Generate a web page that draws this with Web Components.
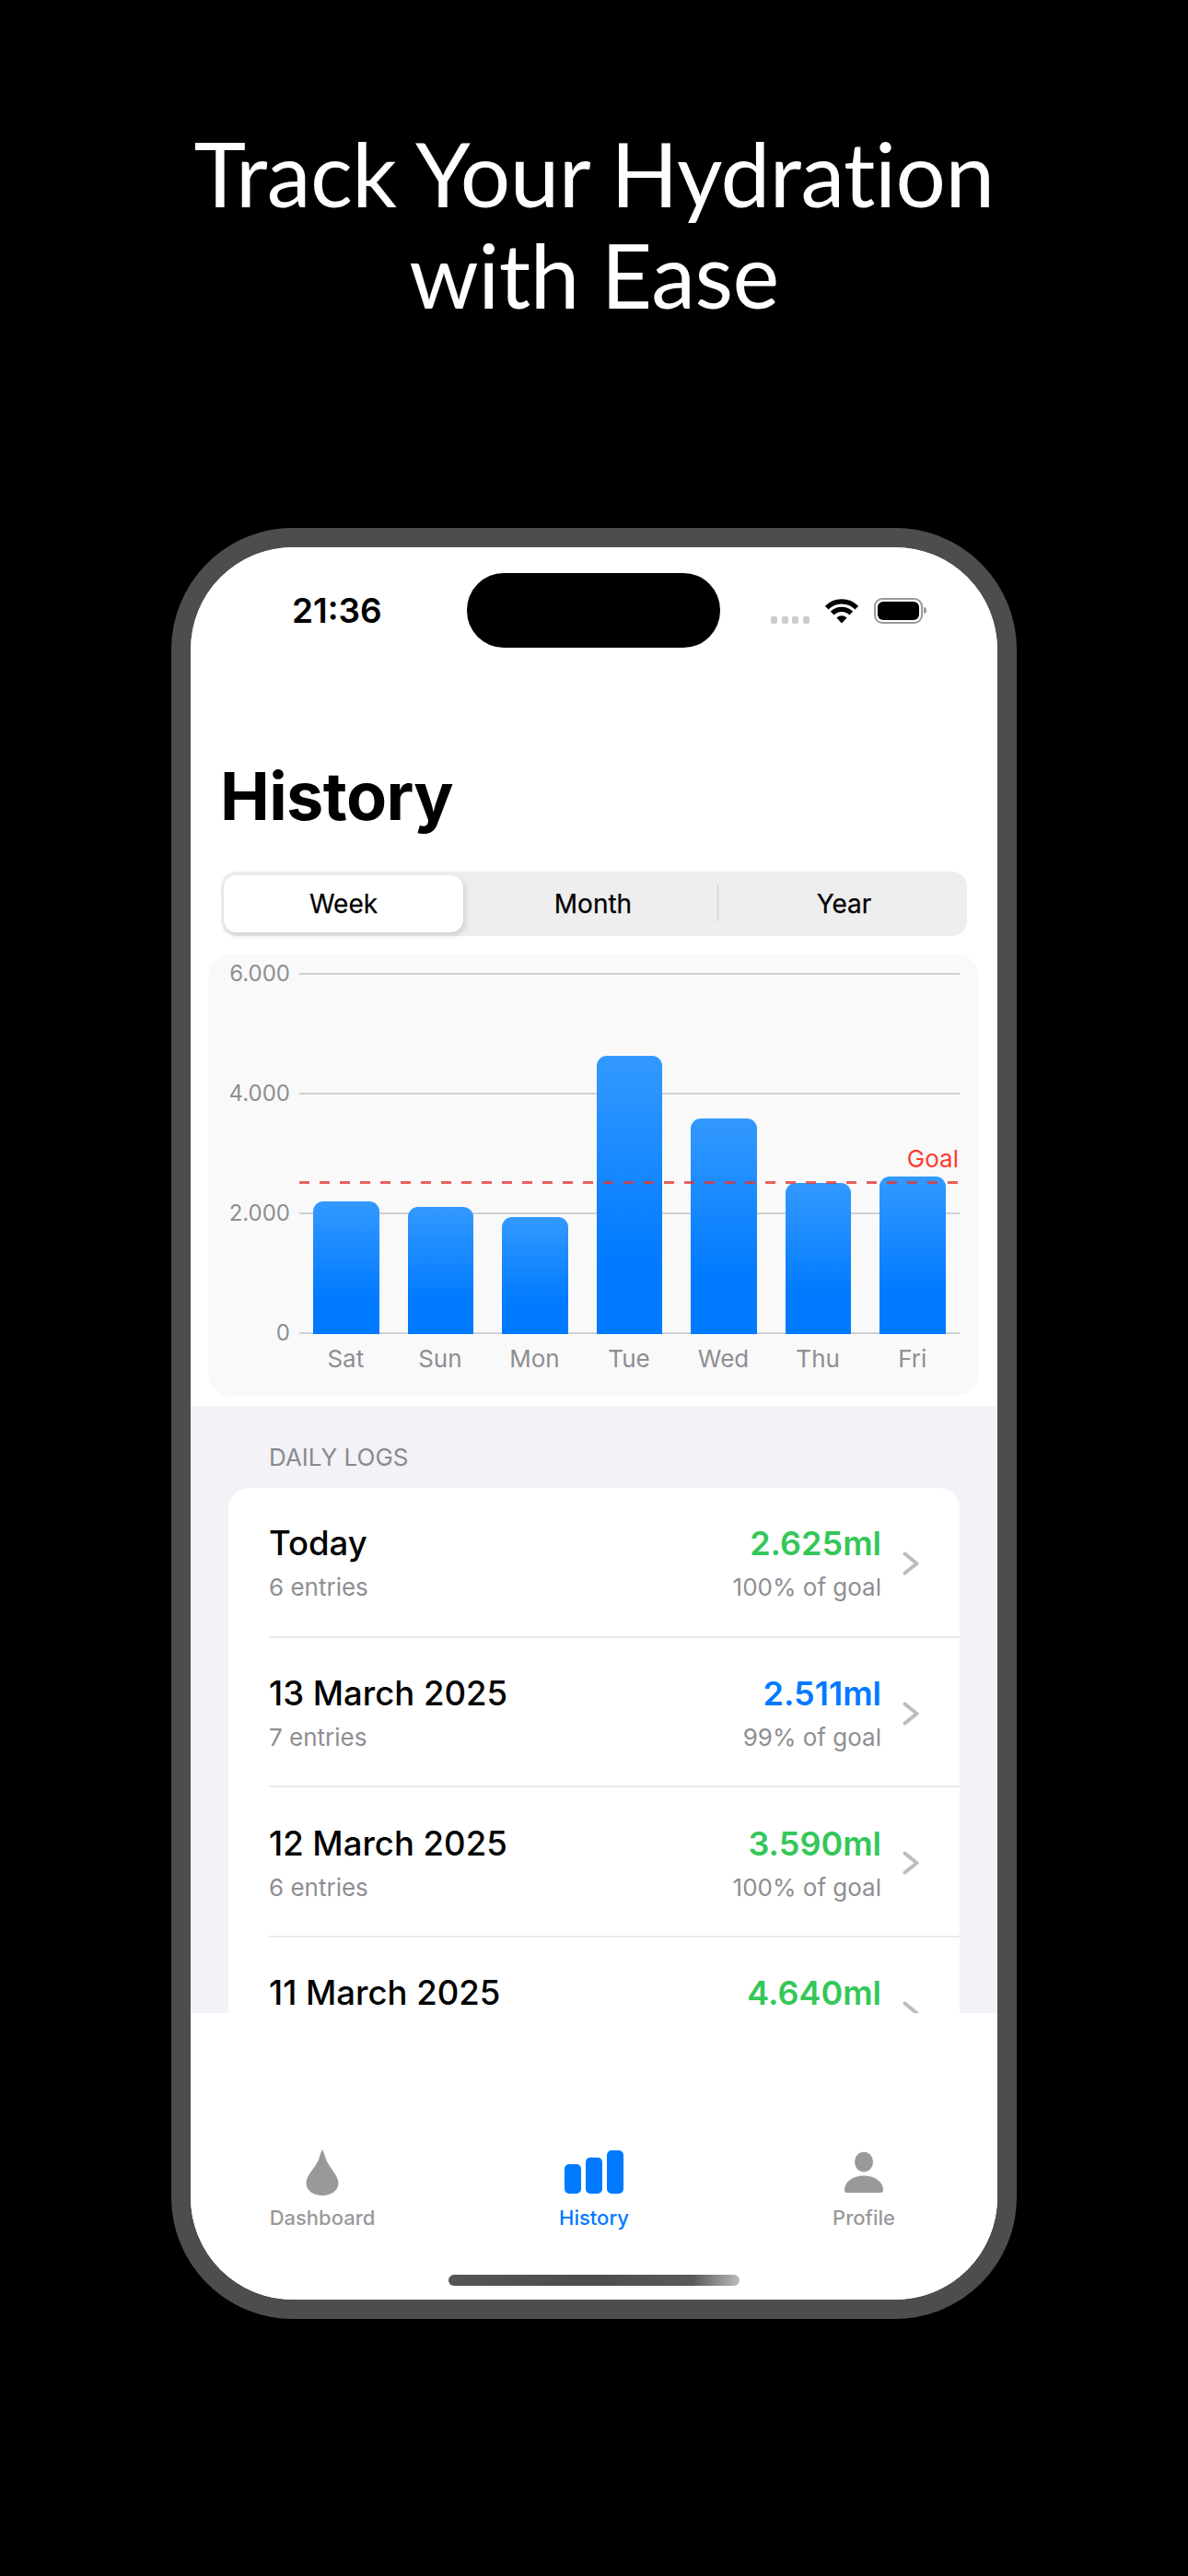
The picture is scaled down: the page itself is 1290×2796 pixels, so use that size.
<!DOCTYPE html>
<html lang="en"><head><meta charset="utf-8"><title>History</title>
<style>html,body{margin:0;background:#000}body{width:1290px;height:2796px;overflow:hidden;font-family:Inter,"Liberation Sans",sans-serif}</style>
</head><body>
<hydration-page>
  <promo-headline>Track Your Hydration<br>with Ease</promo-headline>
  <phone-frame>
    <status-bar time="21:36"></status-bar>
    <page-title>History</page-title>
    <segmented-control></segmented-control>
    <history-chart></history-chart>
    <daily-logs>
      <log-row title="Today" entries="6 entries" value="2.625ml" percent="100% of goal" color="#34c759"></log-row>
      <log-row title="13 March 2025" entries="7 entries" value="2.511ml" percent="99% of goal" color="#007aff"></log-row>
      <log-row title="12 March 2025" entries="6 entries" value="3.590ml" percent="100% of goal" color="#34c759"></log-row>
      <log-row title="11 March 2025" entries="" value="4.640ml" percent="" color="#34c759"></log-row>
    </daily-logs>
    <tab-bar></tab-bar>
  </phone-frame>
</hydration-page>
<script>
const def=(name,html)=>customElements.define(name,class extends HTMLElement{
  connectedCallback(){ if(this.shadowRoot) return; const r=this.attachShadow({mode:'open'}); r.innerHTML=typeof html==='function'?html(this):html; }
});
def('hydration-page',`<style>:host{display:block;width:1290px;height:2796px;background:#000}</style><slot></slot>`);
def('promo-headline',`<style>:host{display:block;height:573px;box-sizing:border-box;padding-top:133px;text-align:center;color:#fff;font:400 96px/110px Lato,"Open Sans",sans-serif;letter-spacing:-.5px}</style><slot></slot>`);
def('phone-frame',`<style>
:host{display:block;width:918px;height:1944px;margin:0 186px;box-sizing:border-box;border:21px solid #4d4d4d;border-radius:132px;background:#fff;overflow:hidden}
.s{display:flex;flex-direction:column;height:100%;background:#fff;border-radius:110px;overflow:hidden}
</style><div class="s"><slot></slot></div>`);
def('status-bar',h=>`<style>
:host{display:grid;grid-template-columns:300px 275px 1fr;height:230px;box-sizing:border-box;padding-top:28px;align-items:start;flex:none}
.t{height:81px;display:flex;align-items:center;padding-left:110px;font:600 37px/46px Inter,sans-serif;color:#000}
.i{height:81px;background:#000;border-radius:40px}
.r{height:81px;display:flex;align-items:center;padding-left:55px;gap:17px}
.d{display:flex;gap:4.6px;align-self:center;margin-top:20px}.d i{width:7px;height:8px;border-radius:2px;background:#ccc}
svg{display:block}
.b{width:53px;height:28px;box-sizing:border-box;border:2px solid #999;border-radius:9px;padding:2px;position:relative}
.b i{display:block;height:100%;background:#000;border-radius:6px}
.b::after{content:"";position:absolute;right:-6px;top:8px;width:3px;height:7px;background:#999;border-radius:0 3px 3px 0}
</style><div class="t">${h.getAttribute('time')}</div><div class="i"></div>
<div class="r"><div class="d"><i></i><i></i><i></i><i></i></div>
<svg width="36" height="28" viewBox="0 0 36 28" fill="none" stroke="#000" stroke-width="5.2"><path d="M1.7 10.7A23 23 0 0 1 34.3 10.7"/><path d="M7.700 16.700A14.500 14.500 0 0 1 28.300 16.700"/><path d="M18 27.500L12.400 21.600A8 8 0 0 1 23.600 21.600Z" fill="#000" stroke="none"/></svg>
<div class="b"><i></i></div></div>`);
def('page-title',`<style>:host{display:block;flex:none;padding-left:32px;height:80px;font:700 72px/80px Inter,sans-serif;color:#000;letter-spacing:-.6px;margin-bottom:42px}</style><slot></slot>`);
def('segmented-control',`<style>
:host{display:grid;grid-template-columns:260px 277px 1fr;flex:none;margin:0 33px 20px 33px;height:70px;box-sizing:border-box;padding:4px 3px;background:#eee;border-radius:16px;font:400 28px/34px Inter,sans-serif;color:#000;-webkit-text-stroke:.25px #000}
div{display:flex;align-items:center;justify-content:center}
.a{background:#fff;border-radius:14px;box-shadow:2px 3px 6px rgba(0,0,0,.14)}
.c{position:relative;padding-left:5px}.c::after{content:"";position:absolute;right:0;top:11px;bottom:12px;width:1px;background:#ccc}
.y{padding-left:6px}
</style><div class="a">Week</div><div class="c">Month</div><div class="y">Year</div>`);
customElements.define('history-chart',class extends HTMLElement{connectedCallback(){ if(this.shadowRoot)return;
 const vals=[['Sat',2215],['Sun',2110],['Mon',1940],['Tue',4640],['Wed',3590],['Thu',2511],['Fri',2625]];
 const r=this.attachShadow({mode:'open'});
 r.innerHTML=`<style>
:host{display:block;flex:none;margin:0 20px 11px 19px;height:479px;box-sizing:border-box;padding:20.5px 21px 0 0;background:#f9f9f9;border-radius:24px;font:400 24px/30px Inter,sans-serif;color:#8e8e93}
.p{display:grid;height:391px;position:relative}
.p>*{grid-area:1/1}
.g{display:flex;flex-direction:column;justify-content:space-between}
.g div{display:flex;align-items:center;height:1px}
.g span{width:89px;text-align:right;margin-right:10px;flex:none}
.g i{flex:1;height:2px;background:#d0d0d2}
.b{margin-left:99px;display:grid;grid-template-columns:repeat(7,1fr);align-items:end}
.b i{display:block;width:71.5px;justify-self:center;border-radius:11px 11px 0 0;background:linear-gradient(#3399ff,#007aff 75%)}
.l{margin:12px 0 0 98px;display:grid;grid-template-columns:repeat(7,1fr);text-align:center;font-size:26px}
.goal{position:absolute;left:99px;right:0;top:225px;height:3px;background:repeating-linear-gradient(90deg,rgba(224,56,50,.78) 0 11px,transparent 11px 22px)}
.t{position:absolute;right:1px;top:186px;color:#ff3b30;font-size:26px}
</style>
<div class="p"><div class="g">${['6.000','4.000','2.000','0'].map(t=>`<div><span>${t}</span><i></i></div>`).join('')}</div>
<div class="b">${vals.map(v=>`<i style="height:${v[1]*.065}px"></i>`).join('')}</div>
<div class="goal"></div><div class="t">Goal</div></div>
<div class="l">${vals.map(v=>`<span>${v[0]}</span>`).join('')}</div>`;
}});
def('daily-logs',`<style>
:host{display:block;flex:1;min-height:0;overflow:hidden;background:#f2f2f7}
h2{margin:0;padding:40px 0 0 85px;height:89px;box-sizing:border-box;font:400 26px/32px Inter,sans-serif;color:#8a8a8e}
.c{margin:0 41px;background:#fff;border-radius:22px 22px 0 0}
</style><h2>DAILY LOGS</h2><div class="c"><slot></slot></div>`);
def('log-row',h=>{const e=h.getAttribute('entries'),p=h.getAttribute('percent');return `<style>
:host{display:block;padding-left:44px}
.w{height:162.7px;box-sizing:border-box;border-bottom:2px solid #e9e9ee;display:flex;align-items:center;padding:3px 44px 0 0}
.l{flex:1}.n{font:500 36.5px/42px Inter,sans-serif;color:#000}
.s{font:400 26px/32px Inter,sans-serif;color:#8e8e93;margin-top:11px;min-height:32px}
.v{text-align:right;margin-right:23px}.v .n{font-size:36px;font-weight:600;color:${h.getAttribute('color')}}
svg{display:block;flex:none}
</style><div class="w"><div class="l"><div class="n">${h.getAttribute('title')}</div><div class="s">${e}</div></div>
<div class="v"><div class="n">${h.getAttribute('value')}</div><div class="s">${p}</div></div>
<svg width="18" height="26" viewBox="0 0 18 26" fill="none" stroke="#bdbdbd" stroke-width="4" stroke-linecap="round" stroke-linejoin="round"><path d="M2.500 2.500L15.500 13L2.500 23.500"/></svg></div>`});
def('tab-bar',`<style>
:host{display:block;flex:none;height:311px;box-sizing:border-box;padding-top:148px;background:#fff;overflow:hidden}
.g{display:grid;grid-template-columns:repeat(3,294px);justify-content:center;font:500 22px/28px Inter,sans-serif;color:#999;text-align:center;margin:0 -3px}
.g>div:not(.a){padding-right:2px}
svg{display:block;margin:0 auto 10px}
.a{color:#007aff}
.h{width:316px;height:12px;margin:48px auto 0;border-radius:6px;background:linear-gradient(90deg,#555,#4d4d4d 50%,#5a5a5a 84%,#bbb)}
</style><div class="g">
<div><svg width="64" height="50" viewBox="0 0 64 50" fill="#999"><path d="M32 0C33.500 3 34.500 6 36 11C39.500 20 49.500 28 49.500 36.500C49.500 44.500 42 50 32 50C22 50 14.500 44.500 14.500 36.500C14.500 28 24.500 20 28 11C29.500 6 30.500 3 32 0Z"/></svg>Dashboard</div>
<div class="a"><svg width="64" height="50" viewBox="0 0 64 50" fill="#007aff"><rect x="0" y="16" width="18" height="32" rx="5"/><rect x="23" y="8.700" width="18" height="39.300" rx="5"/><rect x="46" y="1" width="18" height="47" rx="5"/></svg>History</div>
<div><svg width="64" height="50" viewBox="0 0 64 50" fill="#999"><ellipse cx="32" cy="13.500" rx="10" ry="10.800"/><path d="M11 44C11 35 20 28.500 32 28.500C44 28.500 53 35 53 44Q53 47 50 47H14Q11 47 11 44Z"/></svg>Profile</div>
</div><div class="h"></div>`);
</script>
</body></html>
